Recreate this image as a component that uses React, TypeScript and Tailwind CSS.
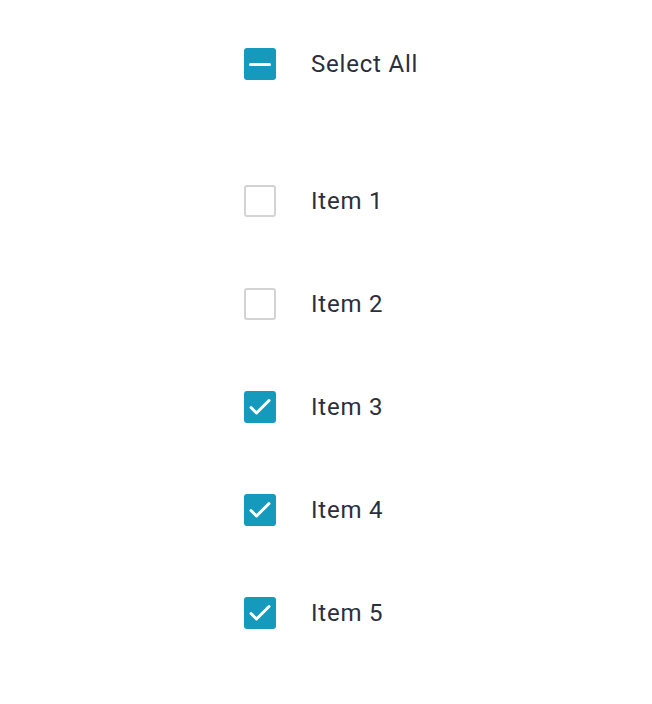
import { useState } from "react";

function Box({ state }: { state: "on" | "off" | "mixed" }) {
  if (state === "off") {
    return <span className="block h-8 w-8 rounded-[3px] border-2 border-[#d3d3d3] bg-white" />;
  }
  return (
    <span className="flex h-8 w-8 items-center justify-center rounded-[3px] bg-[#1599bd]">
      {state === "mixed" ? (
        <span className="block h-[3px] w-[22px] rounded-sm bg-white" />
      ) : (
        <svg width="32" height="32" viewBox="0 0 32 32" fill="none">
          <path d="M7 16.5l5.5 5.5L25 9.5" stroke="white" strokeWidth="3" strokeLinecap="round" strokeLinejoin="round" />
        </svg>
      )}
    </span>
  );
}

export default function App() {
  const [checked, setChecked] = useState([false, false, true, true, true]);
  const all = checked.every(Boolean);
  const none = checked.every((c) => !c);

  return (
    <div className="min-h-[704px] bg-white pl-[244px] pt-[48px] font-['Roboto',sans-serif] text-[24px] tracking-[0.8px] text-[#2b2f3d]">
      <button
        className="flex h-8 items-center gap-[35px]"
        onClick={() => setChecked(checked.map(() => !all))}
      >
        <Box state={all ? "on" : none ? "off" : "mixed"} />
        <span>Select All</span>
      </button>
      <div className="mt-[105px] flex flex-col gap-[71px]">
        {checked.map((c, i) => (
          <button
            key={i}
            className="flex h-8 items-center gap-[35px]"
            onClick={() => setChecked(checked.map((v, j) => (j === i ? !v : v)))}
          >
            <Box state={c ? "on" : "off"} />
            <span>Item {i + 1}</span>
          </button>
        ))}
      </div>
    </div>
  );
}
